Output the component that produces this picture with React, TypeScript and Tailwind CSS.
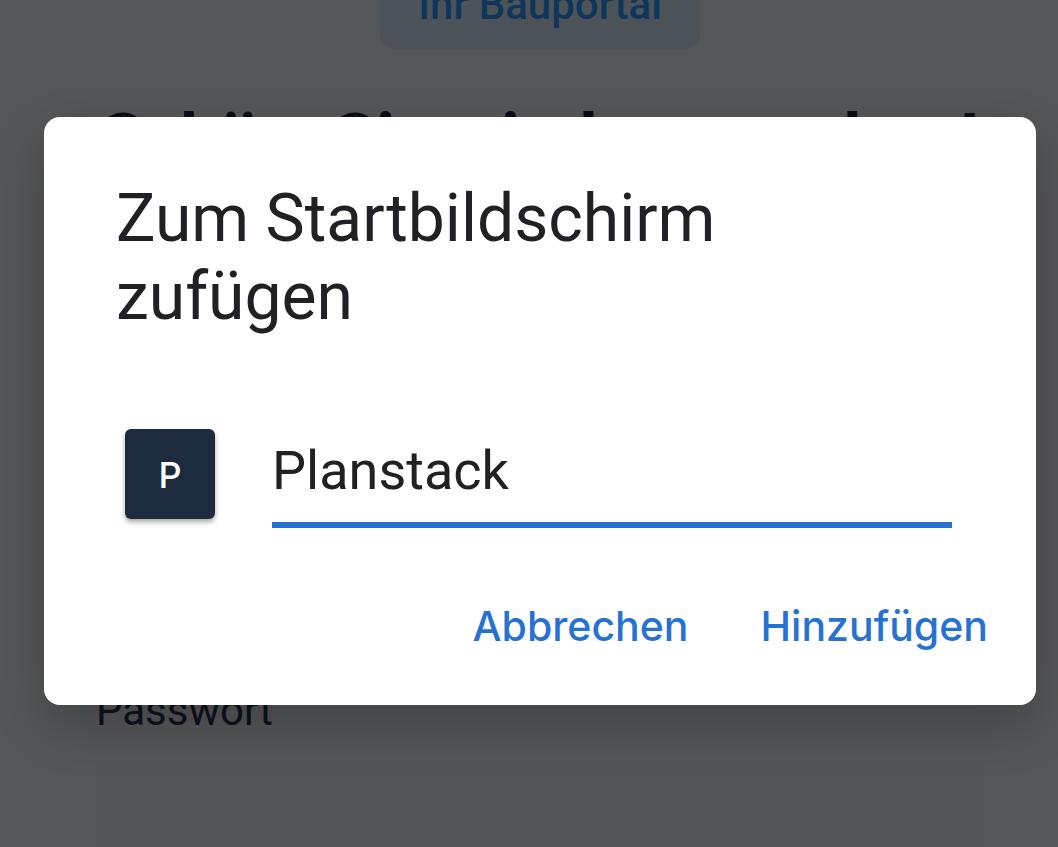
import { useState } from "react";

function LoginPage() {
  return (
    <main className="-mt-6 flex flex-col items-center pl-24 pr-[74px] text-[#27364f]">
      <div className="rounded-b-2xl bg-[#d6eefc] px-[38px] pt-[3px] pb-[18px] text-[42px] leading-[52px] font-medium text-[#2b9cff]">
        Ihr Bauportal
      </div>

      <h1 className="mt-[50px] text-[70px] leading-20 font-bold whitespace-nowrap text-[#1c2740]">
        Schön, Sie wieder zu sehen!
      </h1>

      <form className="mt-[506px] flex w-full flex-col gap-6">
        <label htmlFor="password" className="text-[42px] leading-[52px]">
          Passwort
        </label>
        <input
          id="password"
          type="password"
          className="h-36 w-full bg-[#eeeff2] px-8"
        />
      </form>
    </main>
  );
}

function InstallDialog() {
  const [name, setName] = useState("Planstack");

  return (
    <div className="absolute inset-0 bg-black/65 pt-[117px] pr-[22px] pl-11">
      <div
        role="dialog"
        aria-labelledby="dialog-title"
        className="rounded-2xl bg-white pt-[63px] pb-10 shadow-[0_20px_50px_rgba(0,0,0,0.22)]"
      >
        <h2
          id="dialog-title"
          className="max-w-[760px] pl-[72px] text-[66px] leading-[78px] text-[#202124]"
        >
          Zum Startbildschirm zufügen
        </h2>

        <div className="mt-[87px] flex items-start pr-[84px] pl-[81px]">
          {/* APP ICON */}
          <div className="mt-1.5 flex size-[90px] items-center justify-center rounded-md bg-[#1c2b3d] pt-0.5 font-[Inter,sans-serif] text-[36px] leading-none font-medium text-white shadow-[0_3px_5px_rgba(0,0,0,0.35)]">
            P
          </div>

          {/* NAME */}
          <input
            type="text"
            aria-label="Name"
            value={name}
            onChange={(e) => setName(e.target.value)}
            className="ml-[57px] h-[105px] min-w-0 flex-1 border-b-6 border-[#2672d3] pb-1 text-[54px] text-[#212121] outline-none"
          />
        </div>

        {/* BUTTONS */}
        <div className="mt-[59px] flex justify-end gap-[72px] pr-12 font-[Inter,sans-serif] text-[41px] leading-[78px] font-medium text-[#2672d3]">
          <button type="button">Abbrechen</button>
          <button type="button">Hinzufügen</button>
        </div>
      </div>
    </div>
  );
}

export default function App() {
  return (
    <div className="relative h-screen overflow-hidden bg-[#f4f5f8] font-[Roboto,sans-serif]">
      <LoginPage />
      <InstallDialog />
    </div>
  );
}
